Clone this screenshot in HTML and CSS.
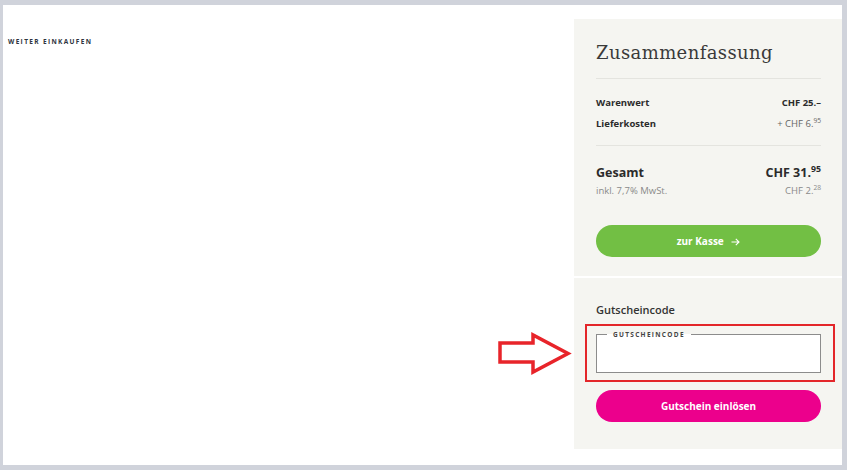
FILE: index.html
```html
<!DOCTYPE html>
<html lang="de">
<head>
  <meta charset="UTF-8">
  <meta name="viewport" content="width=device-width, initial-scale=1">
  <title>Warenkorb</title>
  <link rel="stylesheet" href="styles.css">
</head>
<body>
  <div class="page">
    <main class="main">
      <a class="back-link" href="#">Weiter einkaufen</a>
    </main>

    <aside class="summary">
      <section class="summary-top">
        <h2 class="summary-title">Zusammenfassung</h2>
        <hr class="divider">
        <div class="line">
          <span>Warenwert</span>
          <span>CHF 25.&ndash;</span>
        </div>
        <div class="line">
          <span>Lieferkosten</span>
          <span class="muted">+ CHF 6.<sup>95</sup></span>
        </div>
        <hr class="divider">
        <div class="total">
          <span>Gesamt</span>
          <span>CHF 31.<sup>95</sup></span>
        </div>
        <div class="vat">
          <span>inkl. 7,7% MwSt.</span>
          <span>CHF 2.<sup>28</sup></span>
        </div>
        <button class="btn btn-green" type="button">zur Kasse
          <svg class="arrow" width="9" height="8" viewBox="0 0 9 8"><path d="M0.5 4h7.5M4.8 0.8L8 4L4.8 7.2" fill="none" stroke="#fff" stroke-width="1.1"/></svg>
        </button>
      </section>

      <section class="summary-bottom">
        <h3 class="voucher-title">Gutscheincode</h3>
        <fieldset class="voucher-field">
          <legend>Gutscheincode</legend>
          <input type="text" aria-label="Gutscheincode">
        </fieldset>
        <button class="btn btn-pink" type="button">Gutschein einlösen</button>
      </section>
    </aside>

    <!-- annotation -->
    <div class="mark-box"></div>
    <svg class="mark-arrow" width="75" height="46" viewBox="0 0 75 46">
      <polygon points="3,13 36,13 36,5 71,23.5 36,42 36,32 3,32" fill="none" stroke="#e8242a" stroke-width="3.5" stroke-linejoin="miter"/>
    </svg>
  </div>
</body>
</html>
```

FILE: styles.css
```css
body {
  margin: 0;
  background: #d0d3db;
  font-family: "Open Sans", Arial, sans-serif;
  color: #2b2b2b;
}
.page {
  position: relative;
  display: flex;
  width: 839px;
  height: 460px;
  margin: 5px 0 0 3px;
  background: #fff;
}
.main {
  flex: 1;
  padding: 22px 0 0 5px;
}
.back-link {
  font-size: 6.5px;
  font-weight: 700;
  letter-spacing: 1.35px;
  text-transform: uppercase;
  color: #2e3440;
  text-decoration: none;
}
.summary {
  width: 268px;
  margin-top: 14px;
  height: 430px;
  display: flex;
  flex-direction: column;
  gap: 2px;
}
.summary-top,
.summary-bottom {
  background: #f5f5f1;
  padding: 0 21px 0 22px;
}
.summary-top {
  height: 257px;
  padding-top: 19px;
  box-sizing: border-box;
}
.summary-bottom {
  flex: 1;
  padding-top: 24px;
}
.summary-title {
  margin: 0;
  font-family: "DejaVu Serif", Georgia, serif;
  font-weight: 300;
  font-size: 18px;
  line-height: 30px;
  color: #3a3a3a;
  letter-spacing: 0.4px;
}
.divider {
  border: none;
  border-top: 1px solid #e4e4df;
  margin: 10px 0 0;
}
.line {
  display: flex;
  justify-content: space-between;
  font-size: 9.5px;
  font-weight: 700;
  line-height: 21px;
}
.line:first-of-type {
  margin-top: 13px;
}
.line + .divider {
  margin-top: 11px;
}
.muted {
  font-weight: 400;
  color: #666;
}
sup {
  font-size: 0.7em;
  line-height: 0;
}
.total {
  display: flex;
  justify-content: space-between;
  margin-top: 17px;
  font-size: 12.5px;
  font-weight: 700;
  line-height: 20px;
}
.vat {
  display: flex;
  justify-content: space-between;
  font-size: 9.5px;
  color: #8a8a8a;
  line-height: 16px;
}
.btn {
  display: block;
  width: 100%;
  height: 32px;
  border: none;
  border-radius: 16px;
  color: #fff;
  font-family: inherit;
  font-size: 10px;
  font-weight: 700;
  cursor: pointer;
}
.btn-green {
  margin-top: 26px;
  background: #72bf44;
}
.arrow {
  margin-left: 5px;
  vertical-align: -0.5px;
}
.btn-pink {
  margin-top: 17px;
  background: #ec008c;
}
.voucher-title {
  margin: 0;
  font-size: 11px;
  font-weight: 600;
  line-height: 16px;
  color: #333;
}
.voucher-field {
  margin: 12px 0 0;
  padding: 0 10px;
  height: 43px;
  box-sizing: border-box;
  border: 1px solid #8c8c8c;
  background: #fff;
}
.voucher-field legend {
  padding: 0 6px;
  font-size: 6.5px;
  font-weight: 700;
  letter-spacing: 1.3px;
  text-transform: uppercase;
  color: #444;
}
.voucher-field input {
  width: 100%;
  border: none;
  outline: none;
  background: transparent;
  font-family: inherit;
}
.mark-box {
  position: absolute;
  left: 582px;
  top: 319px;
  width: 246px;
  height: 54px;
  border: 2px solid #e3262a;
}
.mark-arrow {
  position: absolute;
  left: 494px;
  top: 325px;
}
```
